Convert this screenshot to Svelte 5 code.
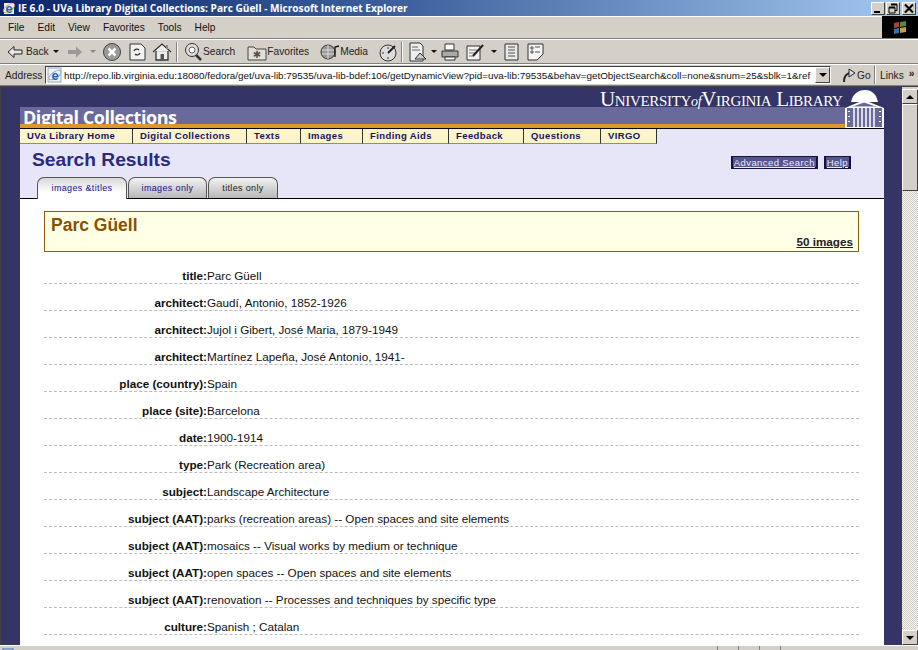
<script>
  const menus = ['File', 'Edit', 'View', 'Favorites', 'Tools', 'Help'];
  const nav = [
    ['UVa Library Home', 113], ['Digital Collections', 114], ['Texts', 54], ['Images', 62],
    ['Finding Aids', 86], ['Feedback', 75], ['Questions', 77], ['VIRGO', 56]
  ];
  const rows = [
    ['title', 'Parc Güell'],
    ['architect', 'Gaudí, Antonio, 1852-1926'],
    ['architect', 'Jujol i Gibert, José Maria, 1879-1949'],
    ['architect', 'Martínez Lapeña, José Antonio, 1941-'],
    ['place (country)', 'Spain'],
    ['place (site)', 'Barcelona'],
    ['date', '1900-1914'],
    ['type', 'Park (Recreation area)'],
    ['subject', 'Landscape Architecture'],
    ['subject (AAT)', 'parks (recreation areas) -- Open spaces and site elements'],
    ['subject (AAT)', 'mosaics -- Visual works by medium or technique'],
    ['subject (AAT)', 'open spaces -- Open spaces and site elements'],
    ['subject (AAT)', 'renovation -- Processes and techniques by specific type'],
    ['culture', 'Spanish ; Catalan']
  ];
</script>

<div class="win">
  <div class="titlebar">
    <svg class="ie" width="14" height="14" viewBox="0 0 14 14"><rect x="2" y="2" width="10" height="11" fill="#e8eef8"/><ellipse cx="7" cy="7" rx="6.500" ry="3" fill="none" stroke="#e8a030" transform="rotate(-35 7 7)"/><text x="7" y="12" text-anchor="middle" class="ieglyph">e</text></svg>
    <span class="title-text">IE 6.0 - UVa Library Digital Collections: Parc Güell - Microsoft Internet Explorer</span>
    <div class="winbtns">
      <span class="wb"><svg width="12" height="11"><rect x="2" y="8" width="6" height="2" fill="#000"/></svg></span>
      <span class="wb"><svg width="12" height="11"><path d="M4 1.500h6v6H8M2 4.500h6v5.500H2z" fill="none" stroke="#000"/><path d="M4 1.500h6M2 4.500h6" stroke="#000" stroke-width="2" fill="none"/></svg></span>
      <span class="wb"><svg width="12" height="11"><path d="M2 1.500l8 8M10 1.500l-8 8" stroke="#000" stroke-width="2"/></svg></span>
    </div>
  </div>

  <div class="menubar">
    <div class="menus">
      {#each menus as m}<span>{m}</span>{/each}
    </div>
    <div class="flag">
      <svg width="16" height="16" viewBox="0 0 16 16"><path d="M2 4l5-1v5l-5 1z" fill="#a8472f"/><path d="M8 3l6-1v5l-6 1z" fill="#4f8a3d"/><path d="M2 10l5-1v5l-5 1z" fill="#3c6fa5"/><path d="M8 9l6-1v5l-6 1z" fill="#c8a13a"/></svg>
    </div>
  </div>

  <div class="toolbar">
    <svg class="back" width="16" height="18" viewBox="0 0 16 18"><path d="M1 9l6-5.500v3.500h8v4H7v3.500z" fill="#e8e8e8" stroke="#222"/></svg>
    <span class="lbl l3">Back</span>
    <i class="caret m7"></i>
    <svg class="ico m8" width="16" height="18" viewBox="0 0 16 18"><path d="M15 9L9 3.500V7H1v4h8v3.500z" fill="#9a9a9a"/></svg>
    <i class="caret light m7"></i>
    <svg class="ico m6" width="20" height="20" viewBox="0 0 20 20"><circle cx="10" cy="10" r="8.500" fill="#9a9a9a" stroke="#444"/><path d="M6.500 6.500l7 7M13.500 6.500l-7 7" stroke="#fff" stroke-width="2.500"/></svg>
    <svg class="ico m6" width="20" height="20" viewBox="0 0 20 20"><path d="M2 2h11l4 4v12H2z" fill="#f2f2f2" stroke="#333"/><path d="M6 9a3 3 0 0 1 5-1M12 11a3 3 0 0 1-5 1" fill="none" stroke="#333" stroke-width="1.300"/></svg>
    <svg class="ico m4" width="20" height="20" viewBox="0 0 20 20"><path d="M1 10L10 2l9 8M4 9v9h12V9" fill="#eee" stroke="#333" stroke-width="1.300"/><rect x="8.500" y="12" width="3.500" height="6" fill="#555"/><rect x="14" y="3" width="2" height="4" fill="#888"/></svg>
    <i class="sep m4"></i>
    <svg class="ico m5" width="20" height="20" viewBox="0 0 20 20"><circle cx="9" cy="8" r="6.500" fill="#ddd" stroke="#333"/><circle cx="9" cy="8" r="3" fill="#fff" stroke="#666"/><path d="M13 13l5 5" stroke="#333" stroke-width="2.500"/></svg>
    <span class="lbl">Search</span>
    <svg class="ico m12" width="20" height="18" viewBox="0 0 20 18"><path d="M1 4h6l2 2h10v11H1z" fill="#e4e0d4" stroke="#444"/><text x="10" y="15" text-anchor="middle" class="star">✱</text></svg>
    <span class="lbl">Favorites</span>
    <svg class="ico m11" width="20" height="18" viewBox="0 0 20 18"><circle cx="8" cy="9" r="7" fill="#999" stroke="#333"/><path d="M2 7h12M2 11h12M8 2v14" stroke="#ddd" fill="none"/><path d="M15 14V4l4-1" stroke="#111" fill="none" stroke-width="1.300"/></svg>
    <span class="lbl">Media</span>
    <svg class="ico m10" width="20" height="20" viewBox="0 0 20 20"><circle cx="10" cy="11" r="8" fill="#ddd" stroke="#333"/><path d="M10 11l7-7" stroke="#222" stroke-width="2"/><path d="M4 11h2M10 5v2M10 15v2" stroke="#333"/></svg>
    <i class="sep m3"></i>
    <svg class="ico m5" width="22" height="20" viewBox="0 0 22 20"><path d="M2 1h10l3 3v15H2z" fill="#eee" stroke="#333"/><path d="M4 5h6M4 8h8" stroke="#666"/><path d="M7 17l5-6 6 6z" fill="#ccc" stroke="#333"/></svg>
    <i class="caret m1"></i>
    <svg class="ico m3" width="20" height="20" viewBox="0 0 20 20"><path d="M5 2h9v6H5z" fill="#fff" stroke="#333"/><path d="M2 9h16v6H2z" fill="#aaa" stroke="#333"/><path d="M5 15h10v3H5z" fill="#fff" stroke="#333"/></svg>
    <svg class="ico m5" width="20" height="20" viewBox="0 0 20 20"><path d="M2 4h13v14H2z" fill="#f2f2f2" stroke="#333"/><path d="M4 8h8M4 11h8M4 14h5" stroke="#777"/><path d="M8 14L18 3" stroke="#222" stroke-width="2"/></svg>
    <i class="caret m6"></i>
    <svg class="ico m6" width="18" height="20" viewBox="0 0 18 20"><path d="M2 2h13v16H2z" fill="#e8e8e8" stroke="#333"/><path d="M5 5h7M5 8h7M5 11h7M5 14h7" stroke="#555"/></svg>
    <svg class="ico m6" width="18" height="20" viewBox="0 0 18 20"><path d="M1 2h15v10l-6 6H1z" fill="#f4f4f4" stroke="#333"/><path d="M4 5h2v2H4zM8 5h5M4 9h2v2H4zM8 10h5" stroke="#555" fill="none"/></svg>
  </div>

  <div class="addrbar">
    <span class="addr-label">Address</span>
    <div class="addr-box">
      <svg width="16" height="16" viewBox="0 0 16 16"><rect x="1" y="1" width="13" height="14" fill="#eef3fb" stroke="#9ab"/><ellipse cx="8" cy="8" rx="7" ry="3" fill="none" stroke="#7aa6dd" transform="rotate(-35 8 8)"/><text x="8" y="13" text-anchor="middle" class="ieglyph">e</text></svg>
      <span class="url">http://repo.lib.virginia.edu:18080/fedora/get/uva-lib:79535/uva-lib-bdef:106/getDynamicView?pid=uva-lib:79535&amp;behav=getObjectSearch&amp;coll=none&amp;snum=25&amp;sblk=1&amp;ref</span>
      <span class="dd"><i></i></span>
    </div>
    <span class="go">
      <svg width="14" height="16" viewBox="0 0 14 16"><path d="M2 15c0-6 3-9 7-9" fill="none" stroke="#222" stroke-width="2"/><path d="M7 2l6 4-6 4z" fill="#ddd" stroke="#222"/></svg>
      Go
    </span>
    <span class="links">Links<b>»</b></span>
  </div>

  <div class="viewport">
    <div class="page">
      <div class="frame">
        <header class="banner">
          <div class="banner-left">
            <div class="band"></div>
            <div class="band2"><span class="dc">Digital Collections</span></div>
            <div class="gold"></div>
          </div>
          <div class="uva">University<em>of</em>Virginia Library</div>
          <svg class="dome" width="39" height="38" viewBox="0 0 39 38">
            <path d="M6 12C8 3 14 0 20 0s11 3 13 12z" fill="#fff"/>
            <path d="M0 18L19 10l20 8z" fill="#fff"/>
            <rect x="0" y="18" width="39" height="20" fill="#fff"/>
            <path d="M2 18h35v19H2z" fill="#69699c"/>
            <path d="M9 18v19M13 18v19M17 18v19M21 18v19M25 18v19M29 18v19" stroke="#fff" stroke-width="1.500"/>
            <path d="M4 21v1M4 26v1M4 31v1M35 21v1M35 26v1M35 31v1" stroke="#fff" stroke-width="2"/>
            <path d="M5 17l14-5 15 5z" fill="#69699c" stroke="#fff"/>
          </svg>
        </header>
        <nav class="nav">
          {#each nav as [t, w]}
            <span class="cell" style="width:{w}px">{t}</span>
          {/each}
        </nav>
        <div class="lav">
          <div class="lav-top">
            <h1>Search Results</h1>
            <div class="btns"><span class="btn">Advanced Search</span><span class="btn">Help</span></div>
          </div>
          <div class="tabs">
            <span class="tab on">images &amp;titles</span>
            <span class="tab blue">images only</span>
            <span class="tab">titles only</span>
          </div>
        </div>
        <main class="body">
          <div class="record">
            <h2>Parc Güell</h2>
            <div class="count">50 images</div>
          </div>
          <dl>
            {#each rows as [k, v]}
              <div class="row"><dt>{k}:</dt><dd>{v}</dd></div>
            {/each}
          </dl>
        </main>
      </div>
    </div>
    <div class="scroll">
      <span class="sb"><i class="up"></i></span>
      <span class="thumb"></span>
      <span class="track"></span>
      <span class="sb"><i class="down"></i></span>
    </div>
  </div>

  <div class="status">
    <svg class="st-ico" width="12" height="12" viewBox="0 0 12 12"><rect x="1" y="1" width="10" height="10" fill="#eef3fb" stroke="#3a6ab0"/></svg>
    <span class="st-main"></span><span class="st"></span><span class="st"></span><span class="st"></span>
    <span class="st s4"><svg width="14" height="12" viewBox="0 0 14 12"><circle cx="6" cy="6" r="5" fill="#4aa04a"/></svg></span>
  </div>
</div>

<style>
  :global(body) { margin: 0; background: #d4d0c8; }
  .win { width: 918px; height: 650px; overflow: hidden; display: flex; flex-direction: column; background: #d4d0c8; font-family: "Liberation Sans", Arial, sans-serif; }
  .titlebar { height: 16px; flex: none; display: flex; align-items: center; padding: 0 2px; background: linear-gradient(90deg, #0a246a 0%, #3f639f 45%, #a6caf0 100%); color: #fff; }
  .ie { flex: none; }
  .ieglyph { font: bold 13px "Liberation Sans", sans-serif; fill: #1a66c0; }
  .star { font: 10px "DejaVu Sans", sans-serif; fill: #555; }
  .title-text { font: bold 10.100px "Open Sans", sans-serif; margin-left: 2px; white-space: nowrap; }
  .winbtns { margin-left: auto; display: flex; }
  .wb { width: 14px; height: 13px; background: #d4d0c8; border: 1px solid; border-color: #fff #404040 #404040 #fff; box-sizing: border-box; display: flex; align-items: center; justify-content: center; }
  .wb:nth-child(2) { margin-left: 1px; }
  .wb:nth-child(3) { margin-left: 2px; }
  .wb svg { display: block; flex: none; }
  .menubar { height: 23px; flex: none; display: flex; border-top: 1px solid #fff; border-bottom: 1px solid #808080; box-sizing: border-box; }
  .menus { display: flex; align-items: center; padding-left: 8px; gap: 13px; font: 10.200px "Liberation Sans", sans-serif; color: #111; flex: 1; }
  .flag { width: 36px; background: #000; display: flex; align-items: center; justify-content: center; margin-top: -1px; }
  .toolbar { height: 25px; flex: none; display: flex; align-items: center; padding-left: 7px; border-top: 1px solid #fff; border-bottom: 1px solid #808080; box-sizing: border-box; font: 10.200px "Liberation Sans", sans-serif; color: #222; }
  .back, .ico { flex: none; }
  .lbl { flex: none; white-space: nowrap; }
  .l3 { margin-left: 3px; width: 20px; }
  .caret { display: block; width: 0; height: 0; border: 3px solid transparent; border-top: 3px solid #111; border-bottom: 0; flex: none; }
  .caret.light { border-top-color: #888; }
  .m1 { margin-left: 1px; }
  .m3 { margin-left: 3px; }
  .m4 { margin-left: 4px; }
  .m5 { margin-left: 5px; }
  .m6 { margin-left: 6px; }
  .m7 { margin-left: 7px; }
  .m8 { margin-left: 8px; }
  .m10 { margin-left: 10px; }
  .m11 { margin-left: 11px; }
  .m12 { margin-left: 12px; }
  .sep { width: 1px; height: 20px; background: #808080; border-right: 1px solid #fff; flex: none; }
  .addrbar { height: 22px; flex: none; display: flex; align-items: center; border-top: 1px solid #fff; box-sizing: border-box; font: 10.200px "Liberation Sans", sans-serif; color: #222; border-bottom: 1px solid #808080; }
  .addr-label { padding-left: 5px; width: 40px; flex: none; }
  .addr-box { width: 786px; height: 18px; box-sizing: border-box; background: #fff; border: 1px solid; border-color: #404040 #fff #fff #404040; display: flex; align-items: center; padding-left: 1px; position: relative; overflow: hidden; flex: none; }
  .addr-box svg { flex: none; }
  .url { font: 9.900px "Liberation Sans", sans-serif; color: #111; white-space: nowrap; margin-left: 1px; width: 752px; overflow: hidden; flex: none; }
  .dd { position: absolute; right: 0; top: 0; width: 15px; height: 16px; background: #d4d0c8; border: 1px solid; border-color: #fff #404040 #404040 #fff; box-sizing: border-box; display: flex; align-items: center; justify-content: center; }
  .dd i { border: 4px solid transparent; border-top: 4px solid #000; border-bottom: 0; }
  .go { display: flex; align-items: center; gap: 1px; width: 44px; padding-left: 11px; box-sizing: border-box; flex: none; border-right: 1px solid #808080; height: 18px; }
  .links { padding-left: 4px; display: flex; gap: 5px; border-left: 1px solid #fff; height: 18px; align-items: center; }
  .links b { font-weight: 700; margin-top: -4px; }
  .viewport { height: 559px; flex: none; display: flex; border-top: 1px solid #404040; border-left: 1px solid #404040; box-sizing: border-box; }
  .page { width: 901px; flex: none; background: #343466; padding: 0 0 0 18px; box-sizing: border-box; overflow: hidden; border-left: 1px solid #343466; }
  .frame { width: 864px; }
  .banner { height: 41px; position: relative; overflow: hidden; }
  .banner-left { height: 41px; display: flex; flex-direction: column; }
  .band { height: 20px; background: #343466; }
  .band2 { height: 17px; background: #69699c; }
  .dc { display: block; font: bold 18px/22px "Open Sans", sans-serif; letter-spacing: -0.45px; color: #fff; padding-left: 3px; margin-top: -1px; white-space: nowrap; height: 17px; }
  .gold { height: 4px; background: #d99a2b; }
  .uva { position: absolute; left: 580px; top: 1px; font: 21px/22px "Liberation Serif", serif; font-variant: small-caps; color: #fff; white-space: nowrap; letter-spacing: -0.33px; }
  .uva em { font-size: 14px; font-style: italic; font-variant: normal; }
  .dome { position: absolute; right: 0; top: 3px; background: #343466; }
  .nav { display: flex; height: 16px; background: #e6e6f8; border-top: 1px solid #000; box-sizing: border-box; }
  .cell { box-sizing: border-box; height: 15px; background: #fdf5c9; border-right: 1px solid #333; border-bottom: 1px solid #8888aa; padding-left: 7px; font: bold 9.500px/13px "Liberation Sans", sans-serif; letter-spacing: 0.4px; color: #14145c; white-space: nowrap; }
  .lav { height: 54px; background: #e6e6f8; border-bottom: 1px solid #000; display: flex; flex-direction: column; }
  .lav-top { display: flex; justify-content: space-between; height: 33px; padding: 4px 33px 0 12px; box-sizing: border-box; }
  h1 { margin: 0; font: bold 19.200px/24px "Liberation Sans", sans-serif; color: #2a2a80; }
  .btns { display: flex; gap: 6px; margin-top: 8px; height: 14px; }
  .btn { font: 9.500px/9px "Liberation Sans", sans-serif; letter-spacing: 0.4px; color: #eaeaff; background: #55558c; border: 2px solid #14143c; border-top-width: 1px; padding: 1px 1px 0; text-decoration: underline; height: 9px; box-sizing: content-box; }
  .tabs { display: flex; padding-left: 17px; gap: 1px; margin-top: auto; height: 21px; }
  .tab { box-sizing: border-box; width: 79px; height: 21px; border: 1px solid #555; border-bottom: 0; border-radius: 7px 7px 0 0; background: linear-gradient(#f2f2f2, #b8b8b8); font: 9px/21px "Liberation Sans", sans-serif; letter-spacing: 0.35px; text-align: center; color: #222; }
  .tab:nth-child(3) { width: 70px; }
  .tab.blue { color: #141480; }
  .tab.on { width: 90px; background: linear-gradient(#d8d8d8, #fff 70%); color: #141480; height: 22px; margin-bottom: -1px; position: relative; }
  .body { background: #fff; height: 446px; padding: 12px 25px 0 24px; box-sizing: border-box; color: #111; }
  .record { box-sizing: border-box; height: 41px; background: #ffffe6; border: 1px solid #8a5a10; padding: 2px 5px 0 6px; }
  h2 { margin: 0; font: bold 17.500px/22px "Liberation Sans", sans-serif; color: #8a4f00; }
  .count { text-align: right; font: bold 11.700px/14px "Liberation Sans", sans-serif; text-decoration: underline; color: #222; margin-top: -1px; }
  dl { margin: 5px 0 0; }
  .row { display: flex; height: 27px; box-sizing: border-box; border-bottom: 1px dashed #bbb; align-items: flex-end; font: 11.700px/14px "Liberation Sans", sans-serif; }
  dt { width: 163px; text-align: right; font-weight: 700; flex: none; }
  dd { margin: 0; }
  .scroll { width: 16px; flex: none; display: flex; flex-direction: column; background: #d4d0c8; padding-top: 2px; box-sizing: border-box; }
  .sb { height: 15px; box-sizing: border-box; flex: none; background: #d4d0c8; border: 1px solid; border-color: #fff #404040 #404040 #fff; display: flex; align-items: center; justify-content: center; }
  .sb i { border: 4px solid transparent; }
  .sb .up { border-bottom: 4px solid #000; border-top: 0; }
  .sb .down { border-top: 4px solid #000; border-bottom: 0; }
  .thumb { height: 87px; flex: none; background: #d4d0c8; border: 1px solid; border-color: #fff #404040 #404040 #fff; box-sizing: border-box; }
  .track { flex: 1; background: repeating-conic-gradient(#d4d0c8 0 25%, #f4f3ef 0 50%) 0 0 / 2px 2px; }
  .status { flex: 1; display: flex; border-top: 1px solid #fff; box-sizing: border-box; overflow: hidden; }
  .st-ico { flex: none; margin: 2px 0 0 2px; }
  .st-main { width: 703px; flex: none; }
  .st { border-left: 1px solid #808080; width: 20px; flex: none; }
  .s4 { width: 60px; padding: 1px 0 0 5px; }
</style>
